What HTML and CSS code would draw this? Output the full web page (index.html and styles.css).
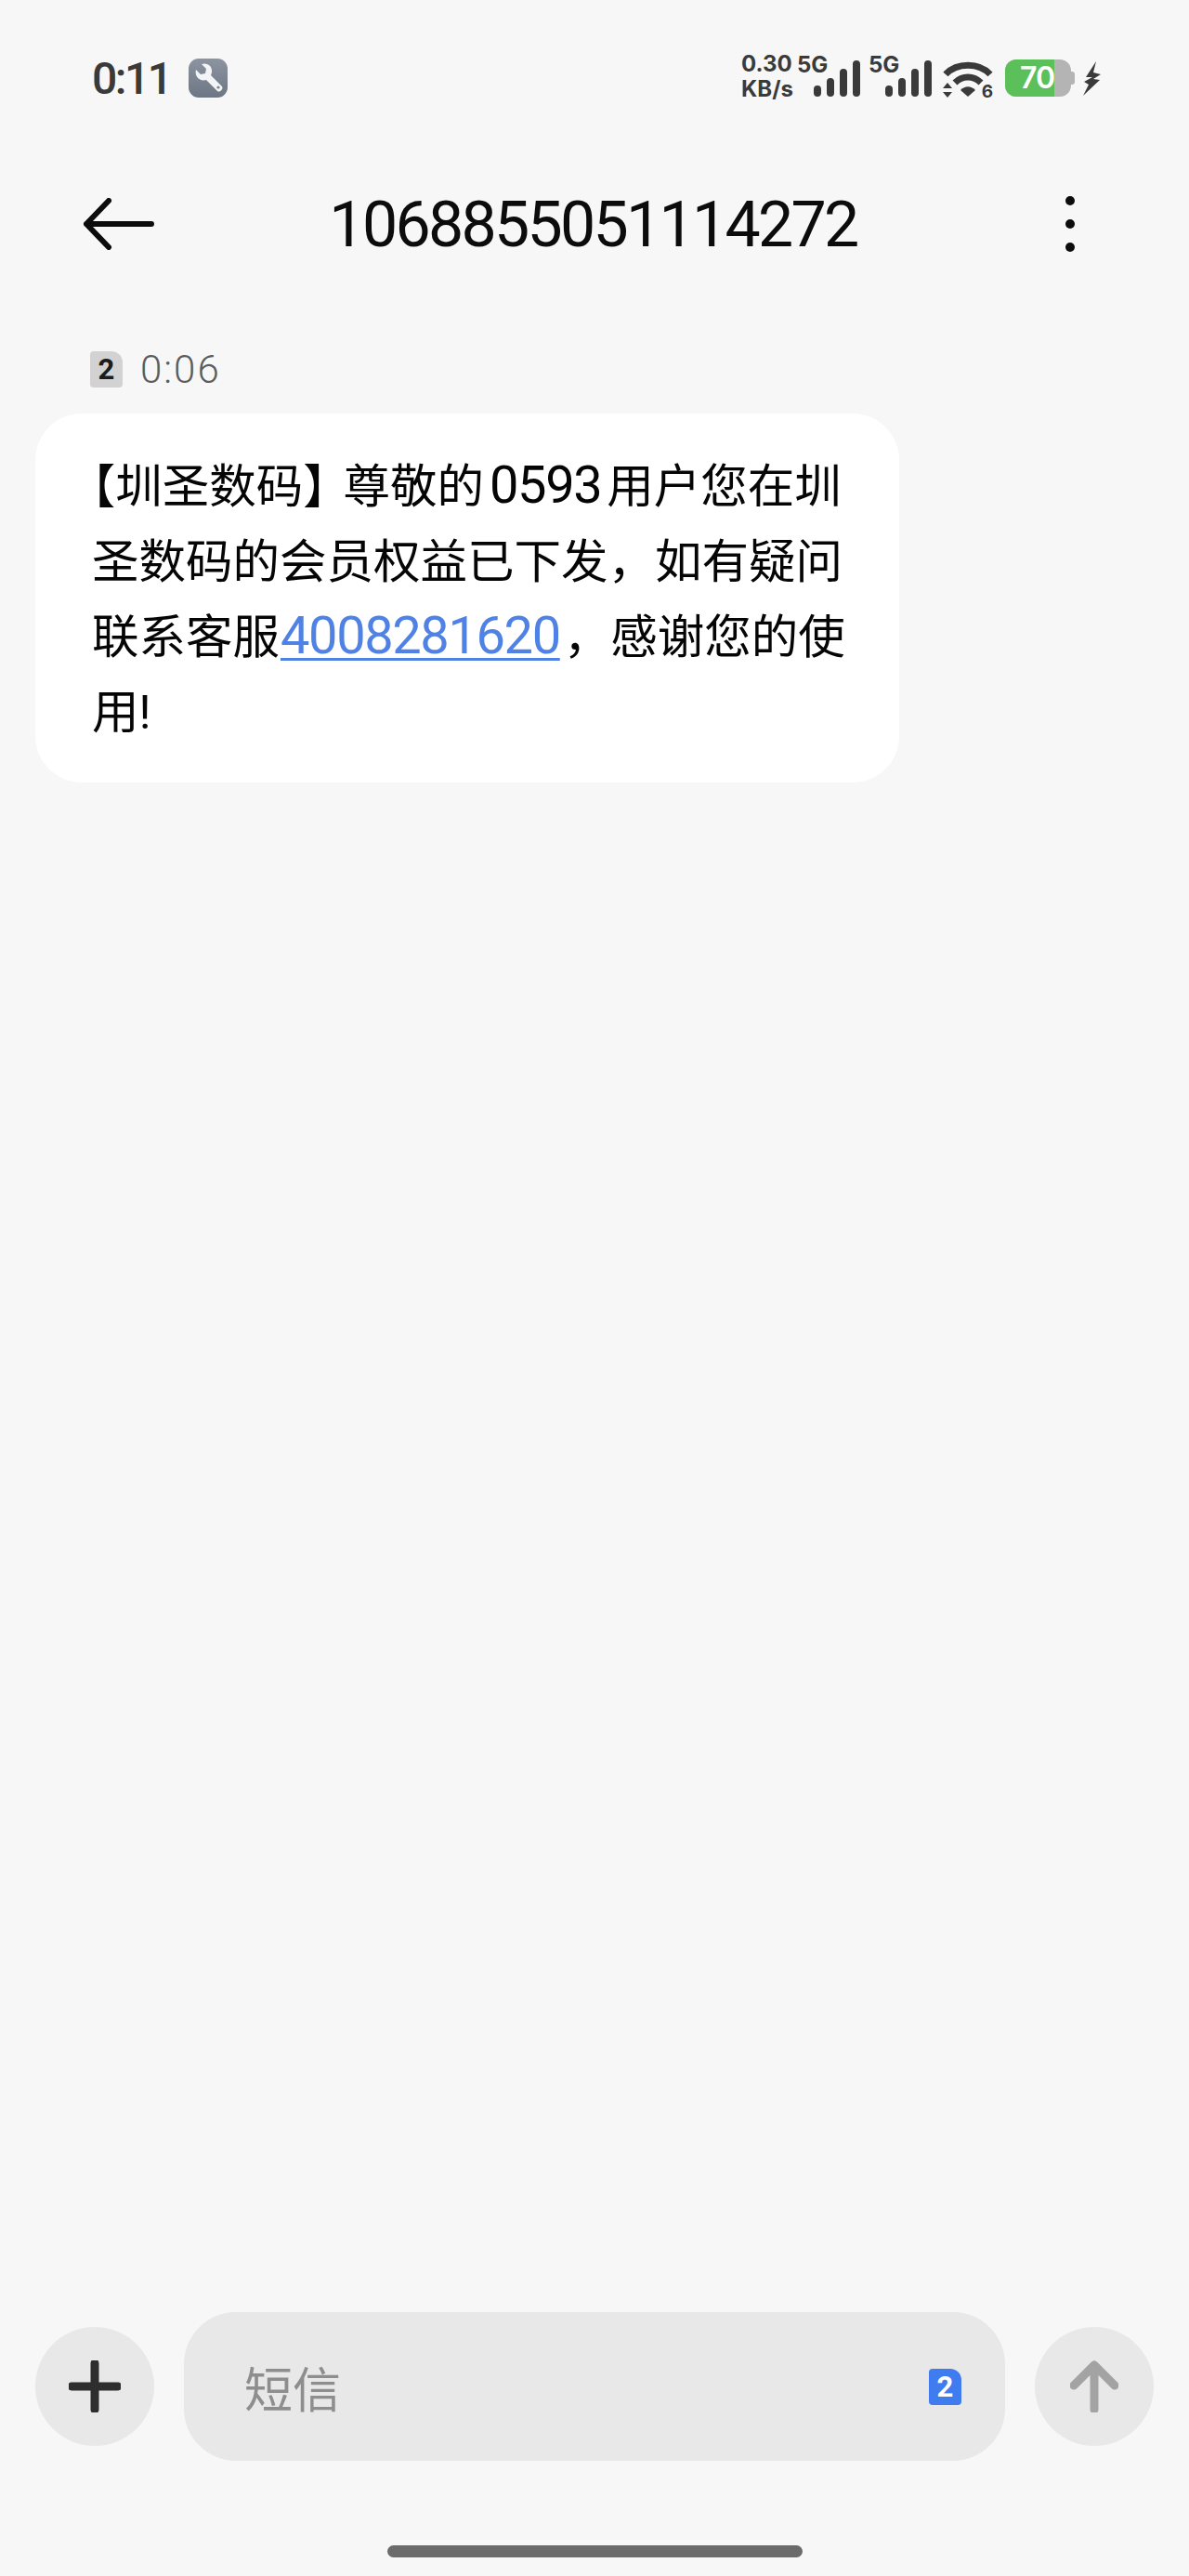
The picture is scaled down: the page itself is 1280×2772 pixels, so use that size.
FILE: index.html
```html
<!DOCTYPE html>
<html lang="zh-CN">
<head>
    <meta charset="UTF-8">
    <meta name="viewport" content="width=device-width, initial-scale=1.0">
    <title>1068855051114272</title>
    <link rel="stylesheet" href="styles.css">
</head>
<body>
<div class="screen">
    <div class="status-bar">
        <div class="status-left">
            <span class="clock">0:11</span>
            <span class="tool-badge">
                <svg viewBox="0 0 42 42" width="42" height="42">
                    <path d="M8 12 L13 17 L18 16 L19 11 L14 6 C20 4 26 8 25 15 L24 18 L36 30 C38 33 33 37 31 35 L19 23 C12 25 6 19 8 12 Z" fill="#f2f4f6"/>
                    <circle cx="32" cy="31" r="1.6" fill="#7a838f"/>
                </svg>
            </span>
        </div>
        <div class="status-right">
            <div class="speed"><span>0.30</span><span>KB/s</span></div>
            <div class="signal">
                <span class="net">5G</span>
                <svg viewBox="0 0 50 40" width="50" height="40"><path d="M4 32v4M18 24v12M32 14v22M46 5v31" stroke="#3a3a3a" stroke-width="8" stroke-linecap="round"/></svg>
            </div>
            <div class="signal signal-second">
                <span class="net">5G</span>
                <svg viewBox="0 0 50 40" width="50" height="40"><path d="M4 32v4M18 24v12M32 14v22M46 5v31" stroke="#3a3a3a" stroke-width="8" stroke-linecap="round"/></svg>
            </div>
            <div class="wifi">
                <svg viewBox="0 0 54 40" width="54" height="40">
                    <path d="M3 14 C15 1 39 1 51 14" fill="none" stroke="#3a3a3a" stroke-width="7"/>
                    <path d="M13 23 C21 15 33 15 41 23" fill="none" stroke="#3a3a3a" stroke-width="7"/>
                    <path d="M19 31 C24 26 30 26 35 31 L27 38 Z" fill="#3a3a3a"/>
                    <path d="M0 29 L5 23 L10 29 Z M0 33 L10 33 L5 39 Z" fill="#3a3a3a"/>
                </svg>
                <span class="wifi-num">6</span>
            </div>
            <div class="battery">
                <div class="battery-body"><div class="battery-fill"></div><span class="battery-num">70</span></div>
                <span class="battery-cap"></span>
            </div>
            <svg class="bolt" viewBox="0 0 20 38" width="20" height="38"><path d="M14 0 L3 17 L10 17 L1 22 L6 25 L0 37 L18 20 L11 19 L19 14 L11 12 Z" fill="#3a3a3a"/></svg>
        </div>
    </div>

    <div class="top-bar">
        <svg class="back" viewBox="0 0 78 56" width="78" height="56"><path d="M28 3 L4 28 L28 53 M4 28 H74" fill="none" stroke="#0c0c0c" stroke-width="6" stroke-linecap="round" stroke-linejoin="round"/></svg>
        <h1 class="title">1068855051114272</h1>
        <div class="more"><i></i><i></i><i></i></div>
    </div>

    <div class="messages">
        <div class="msg-meta">
            <span class="sim sim-grey">2</span>
            <span class="msg-time">0:06</span>
        </div>
        <div class="bubble">
            <span class="line"><span class="punct">【</span>圳圣数码<span class="punct punct-close">】</span>尊敬的<span class="num num-spaced">0593</span>用户您在圳</span>
            <span class="line">圣数码的会员权益已下发，如有疑问</span>
            <span class="line">联系客服<a class="num phone" href="#">4008281620</a>，感谢您的使</span>
            <span class="line">用!</span>
        </div>
    </div>

    <div class="composer">
        <button class="round-btn" type="button">
            <svg viewBox="0 0 56 56" width="56" height="56"><path d="M28 3 V53 M3 28 H53" stroke="#2e2e2e" stroke-width="9" stroke-linecap="round"/></svg>
        </button>
        <div class="input-box">
            <span class="placeholder">短信</span>
            <span class="sim sim-blue">2</span>
        </div>
        <button class="round-btn" type="button">
            <svg viewBox="0 0 52 56" width="52" height="56"><path d="M26 53 V5 M4 27 L26 5 L48 27" fill="none" stroke="#a3a3a3" stroke-width="9" stroke-linecap="round" stroke-linejoin="round"/></svg>
        </button>
    </div>

    <div class="home-row"><div class="home-bar"></div></div>
</div>
</body>
</html>
```

FILE: styles.css
```css
* {
    box-sizing: border-box;
}

body {
    margin: 0;
    background-color: #f7f7f7;
    font-family: Roboto, "Noto Sans CJK SC", sans-serif;
    color: #0c0c0c;
}

.screen {
    display: flex;
    flex-direction: column;
    height: 2772px;
}

/* status bar */
.status-bar {
    display: flex;
    justify-content: space-between;
    align-items: center;
    height: 168px;
    padding: 0 94px 0 99px;
    color: #3a3a3a;
}

.status-left {
    display: flex;
    align-items: center;
    gap: 19px;
}

.clock {
    font-size: 48px;
    font-weight: 500;
    letter-spacing: -2.5px;
}

.tool-badge {
    display: block;
    width: 42px;
    height: 42px;
    border-radius: 11px;
    background: linear-gradient(#8b94a0, #6d7683);
}

.tool-badge svg {
    display: block;
}

.status-right {
    display: flex;
    align-items: flex-start;
    height: 48px;
    font-family: Inter, Roboto, sans-serif;
}

.speed {
    display: flex;
    flex-direction: column;
    width: 52px;
    margin-top: -5px;
    font-size: 24px;
    font-weight: 700;
    line-height: 27px;
    white-space: nowrap;
}

.signal {
    display: flex;
    justify-content: flex-end;
    align-items: flex-end;
    position: relative;
    width: 68px;
    height: 44px;
    margin-left: 8px;
}

.signal-second {
    margin-left: 9px;
}

.signal svg {
    display: block;
}

.net {
    position: absolute;
    left: 0;
    top: -2px;
    font-size: 24px;
    font-weight: 700;
    line-height: 24px;
}

.wifi {
    position: relative;
    width: 54px;
    height: 40px;
    margin: 6px 0 0 12px;
}

.wifi svg {
    display: block;
}

.wifi-num {
    position: absolute;
    right: 0;
    bottom: -2px;
    font-size: 19px;
    font-weight: 700;
    line-height: 19px;
}

.battery {
    display: flex;
    align-items: center;
    margin: 4px 0 0 13px;
}

.battery-body {
    position: relative;
    width: 71px;
    height: 40px;
    border-radius: 12px;
    background-color: #b4b4b4;
    overflow: hidden;
}

.battery-fill {
    width: 74%;
    height: 100%;
    background-color: #5cc05a;
}

.battery-num {
    position: absolute;
    left: 16px;
    top: 0;
    color: #fff;
    font-size: 32px;
    font-weight: 600;
    line-height: 40px;
    letter-spacing: -1px;
}

.battery-cap {
    width: 4px;
    height: 14px;
    border-radius: 0 3px 3px 0;
    background-color: #b4b4b4;
}

.bolt {
    display: block;
    margin: 6px 0 0 9px;
}

/* header */
.top-bar {
    display: grid;
    grid-template-columns: 1fr auto 1fr;
    align-items: center;
    height: 146px;
}

.back {
    display: block;
    margin-left: 89px;
}

.title {
    margin: 2px 0 0 -3px;
    font-size: 68px;
    font-weight: 400;
    letter-spacing: -2.7px;
    color: #0c0c0c;
}

.more {
    display: flex;
    flex-direction: column;
    justify-self: end;
    gap: 15px;
    margin-right: 123px;
}

.more i {
    display: block;
    width: 10px;
    height: 10px;
    border-radius: 50%;
    background-color: #0c0c0c;
}

/* message list */
.messages {
    flex: 1;
    padding: 0 38px;
}

.msg-meta {
    display: flex;
    align-items: center;
    gap: 19px;
    height: 60px;
    margin-top: 53px;
    padding-left: 59px;
}

.sim {
    display: block;
    width: 35px;
    height: 39px;
    border-radius: 4px 12px 4px 4px;
    text-align: center;
    font-size: 31px;
    font-weight: 700;
    line-height: 39px;
}

.sim-grey {
    background-color: #d2d2d2;
    color: #1c1c1c;
}

.sim-blue {
    background-color: #3f7cf0;
    color: #fff;
}

.msg-time {
    font-size: 42px;
    font-weight: 300;
    letter-spacing: 2px;
    color: #5c5c5c;
}

.bubble {
    width: 930px;
    margin-top: 18px;
    padding: 38px 50px 35px 61px;
    border-radius: 50px;
    background-color: #fff;
    font-size: 50.5px;
    line-height: 81px;
    color: #050505;
}

.line {
    display: block;
}

.punct {
    font-feature-settings: "halt";
}

.punct-close {
    margin-right: 18px;
}

.num {
    font-size: 56px;
    line-height: 0;
    letter-spacing: -1.4px;
}

.num-spaced {
    margin: 0 6px;
}

.phone {
    margin: 0 4px 0 1px;
    color: #4f82e4;
    text-decoration-thickness: 3px;
    text-underline-offset: 5px;
}

/* bottom */
.composer {
    display: flex;
    align-items: center;
    justify-content: space-between;
    padding: 0 38px;
    height: 160px;
}

.round-btn {
    display: flex;
    align-items: center;
    justify-content: center;
    width: 128px;
    height: 128px;
    padding: 0;
    border: none;
    border-radius: 50%;
    background-color: #e8e8e8;
}

.input-box {
    display: flex;
    align-items: center;
    justify-content: space-between;
    width: 884px;
    height: 160px;
    padding: 0 47px 0 65px;
    border-radius: 56px;
    background-color: #e8e8e8;
}

.placeholder {
    font-size: 52px;
    color: #8e8e8e;
}

.home-row {
    display: flex;
    justify-content: center;
    align-items: flex-end;
    height: 124px;
    padding-bottom: 20px;
}

.home-bar {
    width: 447px;
    height: 13px;
    border-radius: 7px;
    background-color: #6b6b6b;
}
```
